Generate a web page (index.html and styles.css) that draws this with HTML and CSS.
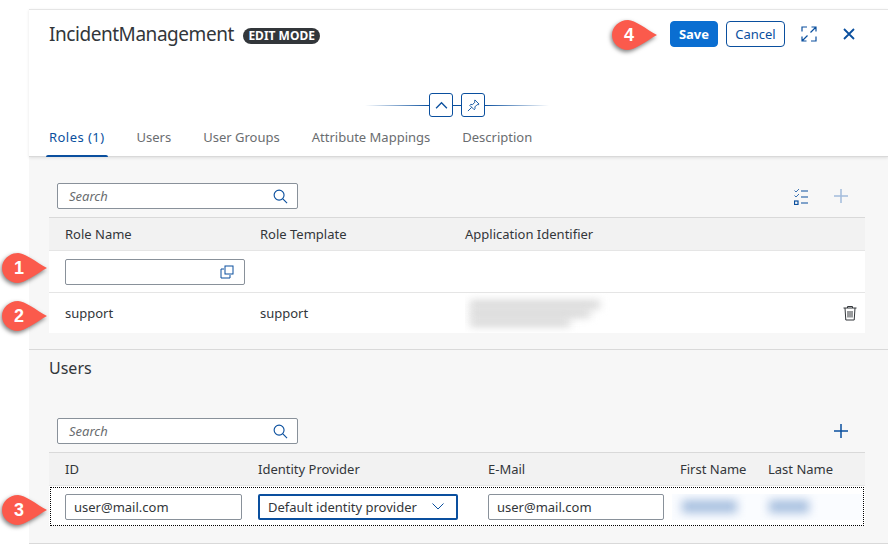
FILE: index.html
```html
<!DOCTYPE html>
<html lang="en">
<head>
  <meta charset="UTF-8">
  <title>IncidentManagement</title>
  <link rel="stylesheet" href="styles.css">
</head>
<body>
  <div class="page">
    <header class="object-header">
      <div class="title-row">
        <h1 class="title">IncidentManagement</h1>
        <span class="mode-badge">EDIT MODE</span>
        <div class="actions">
          <button class="btn btn-primary">Save</button>
          <button class="btn btn-cancel">Cancel</button>
          <svg class="icon action-icon" viewBox="0 0 16 16"><path d="M6 1H1v4.500M10 15h5v-4.500M9.500 6.500L15 1M10.500 1H15v4.500M6.500 9.500L1 15M1 10.500V15h4.500"/></svg>
          <svg class="icon action-close" viewBox="0 0 12 12"><path d="M1 1l10 10M11 1L1 11"/></svg>
        </div>
      </div>
      <div class="collapse-bar">
        <span class="fade-line fade-left"></span>
        <span class="square-btn"><svg class="icon" viewBox="0 0 12 12"><path d="M1 8.500l5-5 5 5"/></svg></span>
        <span class="bar-link"></span>
        <span class="square-btn"><svg class="icon icon-thin" viewBox="0 0 14 14"><path d="M8.500 1l4.500 4.500-1 .8-1-.3-2.500 2.500.2 2-1 1L3 6.800l1-1 2 .2L8.500 3.500 8.200 2.500zM5 9l-4 4"/></svg></span>
        <span class="fade-line fade-right"></span>
      </div>
      <nav class="tabs">
        <span class="tab tab-active">Roles (1)</span>
        <span class="tab">Users</span>
        <span class="tab">User Groups</span>
        <span class="tab">Attribute Mappings</span>
        <span class="tab">Description</span>
      </nav>
    </header>

    <section class="section section-roles">
      <div class="toolbar">
        <div class="search">
          <span class="search-text">Search</span>
          <svg class="icon search-icon" viewBox="0 0 16 16"><circle cx="6.500" cy="6.500" r="5.300"/><path d="M10.500 10.500l4.500 4.500"/></svg>
        </div>
        <svg class="icon tool-list" viewBox="0 0 14 17"><path class="check-marks" d="M.5 2.500L2 4l3-3M.5 7.500L2 9l3-3"/><path d="M7 3h7M7 9h7M7 15h7"/><rect x=".5" y="13" width="3.500" height="3.500"/></svg>
        <svg class="icon tool-plus tool-muted" viewBox="0 0 14 14"><path d="M7 0v14M0 7h14"/></svg>
      </div>
      <div class="table">
        <div class="row row-head roles-grid">
          <span>Role Name</span>
          <span>Role Template</span>
          <span>Application Identifier</span>
        </div>
        <div class="row row-input roles-grid">
          <div class="input input-role">
            <svg class="icon copy-icon" viewBox="0 0 14 14"><path d="M4 4H1v9h9v-3"/><rect x="5" y="1" width="8" height="8"/></svg>
          </div>
        </div>
        <div class="row row-last roles-grid">
          <span>support</span>
          <span>support</span>
          <div class="blur-box">
            <span class="blur-line blur-a"></span>
            <span class="blur-line blur-b"></span>
            <span class="blur-line blur-e"></span>
          </div>
          <svg class="icon trash-icon" viewBox="0 0 14 16"><path d="M.5 3h13M4.500 3V1.500h5V3M2 3l.8 12h8.400L12 3M5 6v6.500M7 6v6.500M9 6v6.500"/></svg>
        </div>
      </div>
    </section>

    <section class="section section-users">
      <h2 class="section-title">Users</h2>
      <div class="toolbar toolbar-users">
        <div class="search">
          <span class="search-text">Search</span>
          <svg class="icon search-icon" viewBox="0 0 16 16"><circle cx="6.500" cy="6.500" r="5.300"/><path d="M10.500 10.500l4.500 4.500"/></svg>
        </div>
        <svg class="icon tool-plus" viewBox="0 0 14 14"><path d="M7 0v14M0 7h14"/></svg>
      </div>
      <div class="table">
        <div class="row row-head users-grid">
          <span>ID</span>
          <span>Identity Provider</span>
          <span>E-Mail</span>
          <span>First Name</span>
          <span>Last Name</span>
        </div>
        <div class="row row-focus users-grid">
          <div class="input">user@mail.com</div>
          <div class="input input-select">
            <span>Default identity provider</span>
            <svg class="icon chevron" viewBox="0 0 12 7"><path d="M.5.500L6 6l5.500-5.500"/></svg>
          </div>
          <div class="input input-mail">user@mail.com</div>
          <div class="blur-box blur-blue"><span class="blur-line blur-c"></span></div>
          <div class="blur-box blur-blue"><span class="blur-line blur-d"></span></div>
        </div>
      </div>
    </section>
  </div>

  <!-- numbered callouts lie over the page -->
  <div class="callout callout-1"><svg viewBox="0 0 50 34"><path d="M17 2C24 2 35 11 46 17C35 23 24 32 17 32C8 32 1 25 1 17S8 2 17 2Z"/></svg><span>1</span></div>
  <div class="callout callout-2"><svg viewBox="0 0 50 34"><path d="M17 2C24 2 35 11 46 17C35 23 24 32 17 32C8 32 1 25 1 17S8 2 17 2Z"/></svg><span>2</span></div>
  <div class="callout callout-3"><svg viewBox="0 0 50 34"><path d="M17 2C24 2 35 11 46 17C35 23 24 32 17 32C8 32 1 25 1 17S8 2 17 2Z"/></svg><span>3</span></div>
  <div class="callout callout-4"><svg viewBox="0 0 50 34"><path d="M17 2C24 2 35 11 46 17C35 23 24 32 17 32C8 32 1 25 1 17S8 2 17 2Z"/></svg><span>4</span></div>
</body>
</html>
```

FILE: styles.css
```css
html, body {
  margin: 0;
  padding: 0;
  height: 100%;
  overflow: hidden;
  background: #fff;
  font-family: "Noto Sans", "Open Sans", sans-serif;
  font-size: 13px;
  color: #32363a;
}
.page {
  margin-left: 29px;
  padding-top: 9px;
}

/* header */
.object-header {
  height: 146px;
  border-top: 1px solid #e5e5e5;
  border-bottom: 1px solid #d9d9d9;
  box-shadow: 0 1px 3px rgba(0, 0, 0, 0.1);
  position: relative;
  background: #fff;
}
.title-row {
  display: flex;
  align-items: center;
  height: 48px;
  padding-left: 20px;
}
.title {
  margin: 0;
  font-size: 19px;
  font-weight: 400;
  letter-spacing: -0.45px;
  line-height: 48px;
  color: #32363a;
}
.mode-badge {
  margin: 4px 0 0 9px;
  background: #32363a;
  color: #fff;
  font-size: 12px;
  font-weight: 700;
  line-height: 16px;
  padding: 0 5.500px;
  border-radius: 8px;
}
.actions {
  margin-left: auto;
  display: flex;
  align-items: center;
  padding-right: 33px;
}
.btn {
  height: 26px;
  box-sizing: border-box;
  padding: 0;
  margin-right: 8px;
  border: 1px solid #0a4f9e;
  border-radius: 4px;
  background: #fff;
  color: #0a4f9e;
  font-family: inherit;
  font-size: 13px;
}
.btn-primary {
  width: 48px;
  background: #0a6ed1;
  border-color: #0a6ed1;
  color: #fff;
  font-weight: 700;
}
.btn-cancel {
  width: 59px;
}
.icon {
  fill: none;
  stroke: #0a4f9e;
  stroke-width: 1.200;
  display: block;
}
.action-icon {
  width: 16px;
  height: 16px;
  margin: 0 26px 0 8px;
}
.action-close {
  width: 12px;
  height: 12px;
  stroke-width: 1.800;
}

.collapse-bar {
  display: flex;
  align-items: center;
  justify-content: center;
  height: 24px;
  margin-top: 35px;
  padding-right: 3px;
}
.fade-line {
  width: 64px;
  height: 1px;
}
.fade-left {
  background: linear-gradient(to right, #fff, #0a4f9e);
}
.fade-right {
  background: linear-gradient(to left, #fff, #0a4f9e);
}
.bar-link {
  width: 8px;
  height: 1px;
  background: #0a4f9e;
}
.square-btn {
  width: 24px;
  height: 24px;
  box-sizing: border-box;
  border: 1px solid #0a4f9e;
  border-radius: 3px;
  display: flex;
  align-items: center;
  justify-content: center;
}
.square-btn svg {
  width: 13px;
  height: 13px;
}
.icon-thin {
  stroke-width: 1;
}

.tabs {
  display: flex;
  gap: 32px;
  padding-left: 20px;
  margin-top: 7px;
}
.tab {
  position: relative;
  line-height: 26px;
  color: #6a6d70;
}
.tab-active {
  color: #0a4f9e;
  letter-spacing: 0.45px;
}
.tab-active::after {
  content: "";
  position: absolute;
  left: -3px;
  right: -3px;
  bottom: -7px;
  height: 2px;
  border-radius: 2px 2px 0 0;
  background: #0a4f9e;
}

/* sections */
.section {
  background: #f7f7f7;
  padding-left: 20px;
  padding-right: 23px;
  border-bottom: 1px solid #d9d9d9;
}
.section-roles {
  height: 192px;
}
.section-users {
  height: 193px;
}
.section-title {
  margin: 0;
  font-size: 16px;
  font-weight: 400;
  line-height: 22px;
  padding-top: 7px;
}
.toolbar {
  display: flex;
  align-items: center;
  height: 26px;
  padding: 26px 0 8px 8px;
}
.toolbar-users {
  padding-top: 39px;
}
.search {
  width: 241px;
  height: 26px;
  box-sizing: border-box;
  border: 1px solid #89919a;
  border-radius: 2px;
  background: #fff;
  display: flex;
  align-items: center;
  justify-content: space-between;
  padding: 0 9px 0 11px;
}
.search-text {
  font-style: italic;
  color: #6a6d70;
}
.search-icon {
  width: 15px;
  height: 15px;
}
.tool-list {
  width: 14px;
  height: 17px;
  margin-left: auto;
  margin-right: 26px;
}
.check-marks {
  stroke-width: 0.800;
}
.tool-plus {
  width: 14px;
  height: 14px;
  margin-left: auto;
  margin-right: 17px;
  stroke-width: 1.500;
}
.tool-list + .tool-plus {
  margin-left: 0;
}
.tool-muted {
  stroke: #a3bcdc;
}

/* tables */
.table {
  background: #fff;
}
.row {
  display: grid;
  align-items: center;
  box-sizing: border-box;
  padding-left: 16px;
  border-bottom: 1px solid #e5e5e5;
}
.row-head {
  height: 34px;
  background: #f2f2f2;
  border-top: 1px solid #d9d9d9;
}
.roles-grid {
  grid-template-columns: 195px 205px 1fr 22px;
}
.users-grid {
  grid-template-columns: 193px 230px 192px 88px 1fr;
}
.row-input {
  height: 42px;
}
.row-last {
  height: 40px;
  border-bottom: 0;
}
.row-focus {
  height: 39px;
  border: 1px dotted #000;
  margin: 1px 1px 0;
  padding-left: 14px;
}
.input {
  width: 177px;
  height: 26px;
  box-sizing: border-box;
  border: 1px solid #89919a;
  border-radius: 2px;
  background: #fff;
  padding: 0 8px;
  line-height: 24px;
}
.input-role {
  width: 180px;
  display: flex;
  align-items: center;
  justify-content: flex-end;
  padding-right: 10px;
}
.input-mail {
  width: 176px;
}
.copy-icon {
  width: 14px;
  height: 14px;
  stroke-width: 1;
}
.input-select {
  width: 200px;
  border: 2px solid #0a4f9e;
  display: flex;
  align-items: center;
  justify-content: space-between;
  padding: 0 12px 0 8px;
}
.chevron {
  width: 12px;
  height: 7px;
  stroke-width: 1;
}
.trash-icon {
  width: 14px;
  height: 16px;
  stroke: #32363a;
  stroke-width: 1;
}
.blur-box {
  display: flex;
  flex-direction: column;
  justify-content: center;
  gap: 2px;
  height: 40px;
  overflow: hidden;
}
.blur-line {
  display: block;
  height: 7px;
  background: #cfcfcf;
  filter: blur(4px);
}
.blur-a {
  width: 130px;
  margin-left: 5px;
}
.blur-b {
  width: 120px;
  margin-left: 5px;
}
.blur-e {
  width: 100px;
  margin-left: 5px;
}
.blur-blue {
  height: 26px;
  margin-left: -8px;
  background: #fafcff;
}
.blur-blue .blur-line {
  height: 13px;
  background: #a8c0e0;
  filter: blur(5px);
}
.blur-c {
  width: 55px;
  margin-left: 10px;
}
.blur-d {
  width: 40px;
  margin-left: 9px;
}

/* callouts */
.callout {
  position: absolute;
  width: 50px;
  height: 34px;
}
.callout svg {
  display: block;
  width: 50px;
  height: 34px;
  fill: #fb5a4c;
  filter: drop-shadow(-1px 2px 2px rgba(0, 0, 0, 0.5));
}
.callout span {
  position: absolute;
  left: 3px;
  top: 6px;
  width: 30px;
  text-align: center;
  color: #fff;
  font-family: "Liberation Sans", sans-serif;
  font-weight: 700;
  font-size: 18px;
  line-height: 22px;
}
.callout-1 { left: 1px; top: 251px; }
.callout-2 { left: 1px; top: 299px; }
.callout-3 { left: 1px; top: 493px; }
.callout-4 { left: 611px; top: 18px; }
```
